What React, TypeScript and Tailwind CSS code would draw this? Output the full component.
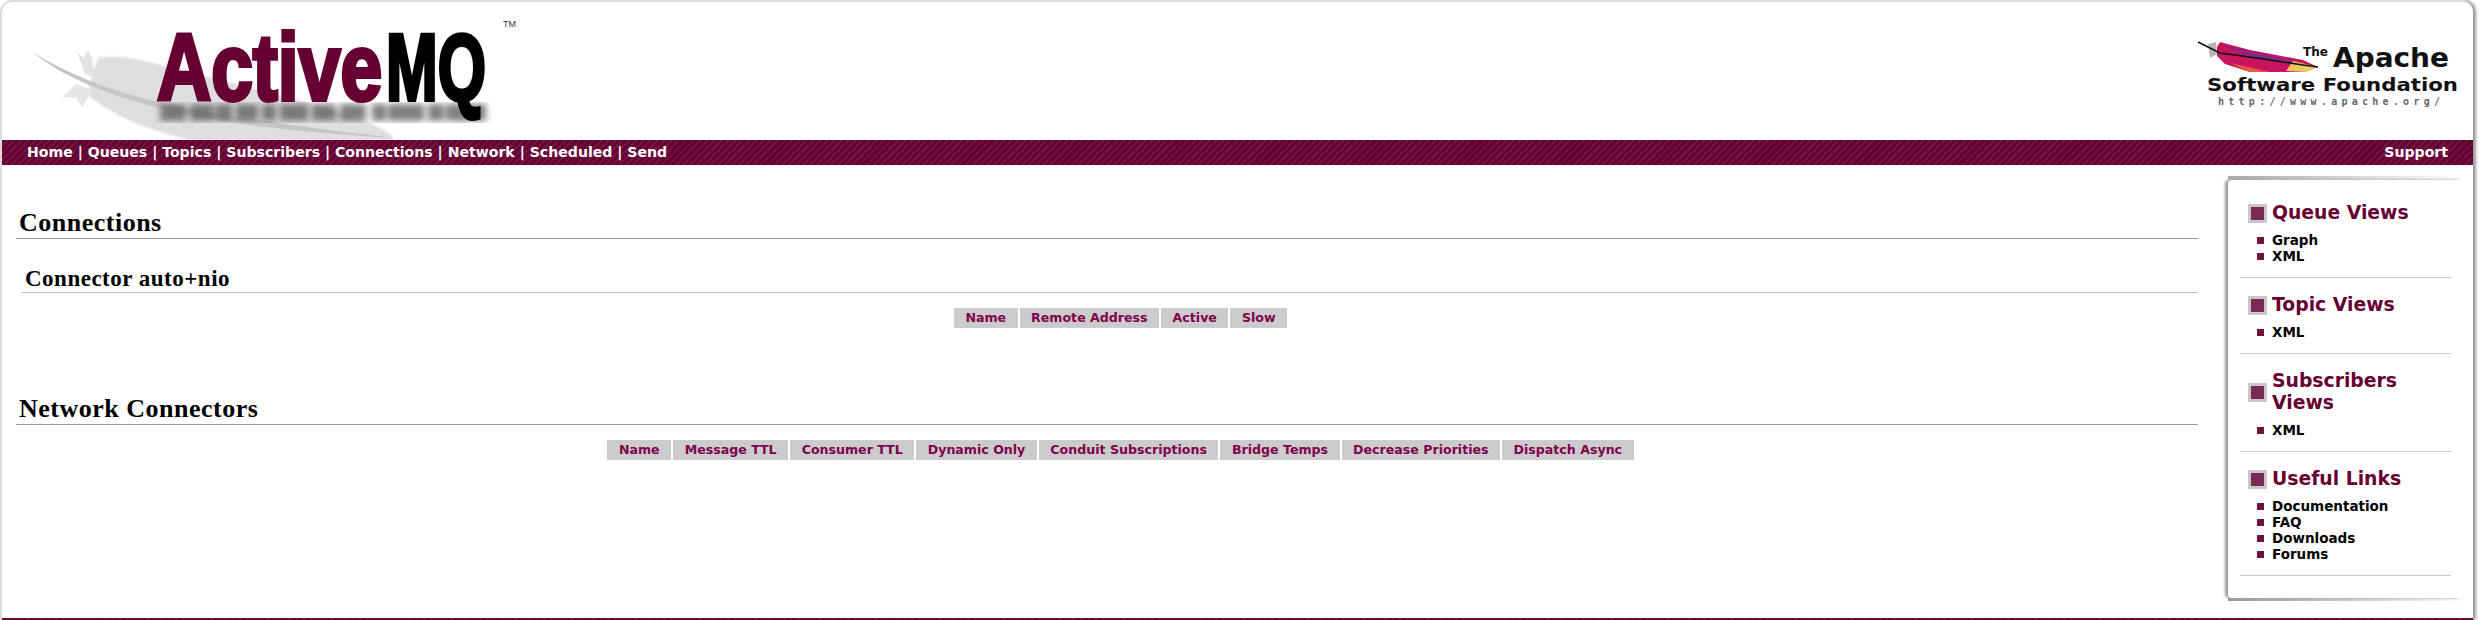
import React from 'react';

const verdana = 'font-["DejaVu_Sans",Verdana,sans-serif]';

const navLinks = ['Home', 'Queues', 'Topics', 'Subscribers', 'Connections', 'Network', 'Scheduled', 'Send'];

const connectionCols = ['Name', 'Remote Address', 'Active', 'Slow'];
const networkCols = [
  'Name',
  'Message TTL',
  'Consumer TTL',
  'Dynamic Only',
  'Conduit Subscriptions',
  'Bridge Temps',
  'Decrease Priorities',
  'Dispatch Async',
];

const sideBoxes = [
  { title: 'Queue Views', links: ['Graph', 'XML'] },
  { title: 'Topic Views', links: ['XML'] },
  { title: 'Subscribers Views', links: ['XML'] },
  { title: 'Useful Links', links: ['Documentation', 'FAQ', 'Downloads', 'Forums'] },
];

const stripes =
  'bg-[repeating-linear-gradient(135deg,#660033_0px,#660033_3px,#701440_3px,#701440_5px)]';

// blurred blocks under the name, the reflection in the logo
const reflection = [
  [160, 26], [190, 24], [216, 16], [236, 22], [262, 14], [280, 28], [312, 24], [340, 26],
  [372, 14], [388, 36], [428, 16], [446, 40],
];

const ActiveMQLogo = () => (
  <svg width="530" height="138" viewBox="0 0 530 138" className="block">
    <defs>
      <filter id="blur3">
        <feGaussianBlur stdDeviation="3" />
      </filter>
      <filter id="blur1">
        <feGaussianBlur stdDeviation="1" />
      </filter>
    </defs>
    <g transform="translate(-2,-2)">
      {/* grey feather behind the name */}
      <path
        d="M98 58 C120 54 140 60 165 66 L300 100 C340 112 375 122 393 136 L392 140 L190 140 C150 130 115 118 88 95 C90 80 94 68 98 58 Z"
        fill="#dedede"
        filter="url(#blur1)"
      />
      <path d="M77 52 L84 58 L88 50 L92 58 L95 78 L85 74 Z" fill="#e4e4e4" />
      <path d="M62 97 L72 88 L76 84 L92 90 L88 98 L82 107 L76 98 Z" fill="#e6e6e6" />
      <path d="M33 52 C60 70 110 92 160 102 C230 118 300 126 393 138 C300 132 220 124 160 108 C110 96 60 76 33 52 Z" fill="#c6c6c6" />
      <g filter="url(#blur3)" fill="#606060" opacity="0.8">
        {reflection.map(([x, w]) => (
          <rect key={x} x={x} y={104} width={w} height={17} />
        ))}
      </g>
      <text transform="translate(157 100) scale(0.798 1)" fontFamily="Liberation Sans" fontWeight="700" fontSize="94" stroke="#660033" strokeWidth="4" fill="#660033">
        Active
      </text>
      <text transform="translate(386 100) scale(0.66 1)" fontFamily="Liberation Sans" fontWeight="700" fontSize="94" stroke="#000" strokeWidth="4" fill="#000">
        MQ
      </text>
      <text x="503" y="27" fontFamily="Liberation Sans" fontSize="9" fill="#333">
        TM
      </text>
    </g>
  </svg>
);

const ApacheLogo = () => (
  <svg width="280" height="80" viewBox="0 0 280 80" className="block">
    <path d="M27 17 L30 12 L60 20 L113 30 L128 37 L115 42 L60 42 L35 34 L27 26 Z" fill="#c8145e" />
    <path d="M32 15 L70 24 L105 32 L70 30 Z" fill="#7a2a90" />
    <path d="M40 33 L80 42 L60 42 Z" fill="#e85a40" />
    <path d="M103 31 L128 37 L116 42 L96 41 Z" fill="#e8c860" />
    <path d="M18 14 L26 12 L27 24 L20 28 Z" fill="#b5b5b5" />
    <path d="M8 12 L30 23 L67 28 L113 35 L128 37" fill="none" stroke="#111" strokeWidth="1.6" />
    <text x="113" y="26" fontFamily="DejaVu Sans" fontWeight="700" fontSize="12" fill="#111" textLength="25" lengthAdjust="spacingAndGlyphs">The</text>
    <text x="143" y="37" fontFamily="DejaVu Sans" fontWeight="700" fontSize="26" fill="#111" textLength="116" lengthAdjust="spacingAndGlyphs">Apache</text>
    <text x="17" y="61" fontFamily="DejaVu Sans" fontWeight="700" fontSize="18" fill="#111" textLength="251" lengthAdjust="spacingAndGlyphs">
      Software Foundation
    </text>
    <text x="28" y="75" fontFamily="DejaVu Sans Mono" fontWeight="700" fontSize="10" fill="#666" textLength="222">
      http://www.apache.org/
    </text>
  </svg>
);

const HeaderTable = ({ cols }: { cols: string[] }) => (
  <table className="mx-auto border-separate border-spacing-[2px]">
    <thead>
      <tr>
        {cols.map((col) => (
          <th key={col} className="bg-[#cccccc] h-[20px] px-[11.5px] py-0 text-[12.6px] leading-none font-bold text-[#80004f] whitespace-nowrap">
            {col}
          </th>
        ))}
      </tr>
    </thead>
  </table>
);

const SideBox = ({ title, links }: { title: string; links: string[] }) => (
  <div className="border-b border-[#cccccc] mx-3 pb-[13px] pt-[16px]">
    <div className="flex items-center gap-[5px] pl-2">
      <span className="w-[19px] h-[19px] shrink-0 bg-[#7a2a55] border-[3px] border-[#c8c8c8]" />
      <h3 className="text-[18.8px] leading-[22px] font-bold text-[#660033]">{title}</h3>
    </div>
    <ul className="mt-[8px] pl-[17px]">
      {links.map((link) => (
        <li key={link} className="flex items-center gap-[8px] h-[16px] text-[13.5px] font-bold text-black">
          <span className="w-[7px] h-[7px] bg-[#6e1240]" />
          {link}
        </li>
      ))}
    </ul>
  </div>
);

export default function App() {
  return (
    <div className={`h-[620px] overflow-hidden bg-white ${verdana}`}>
      <div className="h-[620px] mr-[6px] flex flex-col border-l-2 border-t-2 border-[#dddddd] rounded-t-[12px] shadow-[3px_0_3px_#999999]">
        <header className="h-[138px] flex justify-between shrink-0">
          <ActiveMQLogo />
          <div className="pt-[28px] pr-[3px]">
            <ApacheLogo />
          </div>
        </header>

        <nav className={`h-[25px] shrink-0 flex justify-between items-center pl-[25px] pr-[25px] text-[14.1px] font-bold text-white ${stripes}`}>
          <div>{navLinks.join(' | ')}</div>
          <div>Support</div>
        </nav>

        <div className="flex-1 flex items-start">
          <main className="flex-1 pl-[14px] font-['Liberation_Serif',serif]">
            <h2 className="mt-[44px] pl-[3px] text-[26px] tracking-[0.5px] leading-[28px] font-bold text-black border-b border-[#999999] pb-[1px]">
              Connections
            </h2>
            <h3 className="mt-[27px] ml-[6px] pl-[3px] text-[23px] tracking-[0.5px] leading-[26px] font-bold text-black border-b border-[#bbbbbb]">
              Connector auto+nio
            </h3>
            <div className={`mt-[13px] pl-[27px] ${verdana}`}>
              <HeaderTable cols={connectionCols} />
            </div>
            <h2 className="mt-[65px] pl-[3px] text-[26px] tracking-[0.5px] leading-[28px] font-bold text-black border-b border-[#999999] pb-[1px]">
              Network Connectors
            </h2>
            <div className={`mt-[13px] pl-[27px] ${verdana}`}>
              <HeaderTable cols={networkCols} />
            </div>
          </main>
          <aside className="relative w-[235px] h-[418px] mt-[15px] ml-[30px] mr-[10px] pt-[6px] rounded-[4px] shadow-[-3px_0_3px_#999999] shrink-0">
            <div className="absolute left-0 right-0 -top-[4px] h-[4px] bg-gradient-to-r from-[#aaaaaa] to-transparent" />
            <div className="absolute left-0 right-0 -bottom-[3px] h-[3px] bg-gradient-to-r from-[#999999] to-transparent" />
            {sideBoxes.map((box) => (
              <SideBox key={box.title} {...box} />
            ))}
          </aside>
        </div>

        <div className={`h-[2px] shrink-0 ${stripes}`} />
      </div>
    </div>
  );
}
